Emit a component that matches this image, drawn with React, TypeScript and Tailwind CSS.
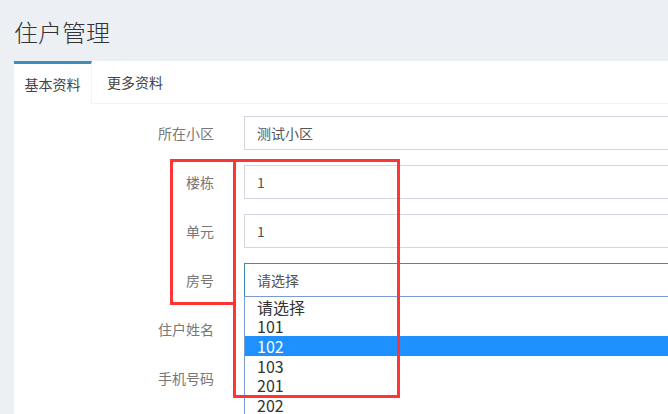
import React from "react";

const font = { fontFamily: '"Noto Sans CJK SC", "Liberation Sans", sans-serif' };

const rows = [
  { label: "所在小区", value: "测试小区" },
  { label: "楼栋", value: "1" },
  { label: "单元", value: "1" },
  { label: "房号", value: "请选择", select: true },
  { label: "住户姓名", value: "" },
  { label: "手机号码", value: "" },
];

const options = ["请选择", "101", "102", "103", "201", "202"];

export default function App() {
  return (
    <div
      className="relative w-[668px] h-[414px] overflow-hidden bg-[#ecf0f5] text-[#333]"
      style={font}
    >
      {/* Page header */}
      <div className="h-[61px] px-[14px] flex items-center">
        <h1 className="text-[24px] leading-none pt-[2px] font-light">住户管理</h1>
      </div>

      {/* Content box */}
      <div className="ml-[14px] h-[353px] bg-white overflow-hidden">
        {/* Tabs */}
        <div className="flex h-[44px] text-[14px]">
          <div className="w-[78px] shrink-0 h-full border-t-[3px] border-r border-[#3c8dbc] border-r-[#f4f4f4] flex items-center justify-center pb-[1px] text-[#444]">
            基本资料
          </div>
          <div className="flex-1 h-[43px] border-b border-[#f4f4f4] flex items-center pl-[15px] pt-[1px] text-[#444]">
            更多资料
          </div>
        </div>

        {/* Form */}
        <div className="pt-[11px]">
          {rows.map((r) => (
            <div key={r.label} className="flex items-center h-[34px] mb-[15px] text-[14px]">
              <div className="w-[200px] shrink-0 text-right text-[#777]">{r.label}</div>
              <div
                className={
                  "ml-[30px] w-[460px] shrink-0 h-full flex items-center px-[12px] border text-[#555] " +
                  (r.select ? "border-[#3c8dbc]" : "border-[#d2d6de]")
                }
              >
                {r.value}
              </div>
            </div>
          ))}
        </div>
      </div>

      {/* Open select dropdown */}
      <div className="absolute left-[244px] top-[296px] w-[460px] bg-white border border-[#7a9cd3] text-[16px] leading-[18px]">
        {options.map((o) => (
          <div
            key={o}
            className={
              "h-[19.6px] flex items-center pl-[12px] " +
              (o === "102" ? "bg-[#1e90ff] text-white" : "text-[#333]")
            }
          >
            {o}
          </div>
        ))}
      </div>

      {/* Annotation boxes */}
      <div className="absolute left-[170px] top-[159px] w-[66px] h-[146px] border-[3px] border-[#ff3535]" />
      <div className="absolute left-[233px] top-[159px] w-[167px] h-[239px] border-[3px] border-[#ff3535]" />
    </div>
  );
}
